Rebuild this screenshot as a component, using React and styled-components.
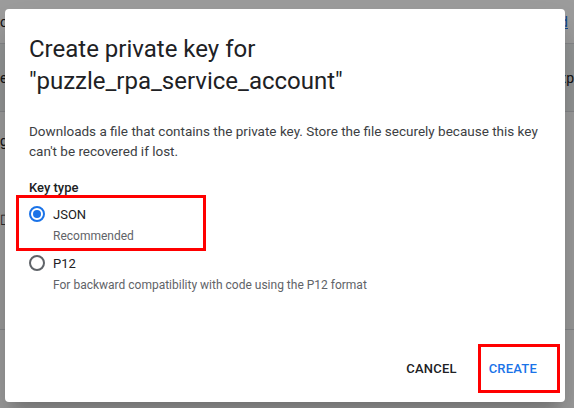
import React, { useState } from "react";
import styled, { createGlobalStyle } from "styled-components";

const GlobalStyle = createGlobalStyle`
  html, body {
    margin: 0;
    padding: 0;
    width: 574px;
    height: 408px;
    overflow: hidden;
    font-family: Roboto, "Liberation Sans", Arial, sans-serif;
  }
  * { box-sizing: border-box; }
`;

const Screen = styled.div`
  position: relative;
  width: 574px;
  height: 408px;
  overflow: hidden;
  background: #ffffff;
`;

const Page = styled.div`
  display: flex;
  flex-direction: column;
  height: 100%;
  font-size: 14px;
  color: #202124;
`;

const PageRow = styled.div`
  display: flex;
  justify-content: space-between;
  align-items: center;
  height: ${(p) => p.h}px;
  background: ${(p) => p.bg || "#ffffff"};
  border-bottom: ${(p) => (p.line ? "1px solid #dadce0" : "none")};
`;

const PageLink = styled.span`
  color: #1a73e8;
  text-decoration: underline;
  margin-right: 6px;
`;

const PageText = styled.span`
  margin-right: ${(p) => p.mr || 0}px;
`;

const Scrim = styled.div`
  position: absolute;
  inset: 0;
  background: rgba(0, 0, 0, 0.39);
  display: flex;
  align-items: flex-start;
  padding: 9px 0 0 5px;
`;

const Dialog = styled.div`
  width: 560px;
  height: 393px;
  background: #ffffff;
  border-radius: 4px;
  box-shadow: 0 11px 15px -7px rgba(0, 0, 0, 0.2), 0 24px 38px 3px rgba(0, 0, 0, 0.14);
  display: flex;
  flex-direction: column;
  padding: 24px 0 0 24px;
`;

const Title = styled.h2`
  margin: 0;
  font-size: 24px;
  font-weight: 400;
  line-height: 32px;
  color: #202124;
`;

const Body = styled.p`
  margin: 24px 0 0;
  font-size: 13.5px;
  line-height: 20px;
  color: #3c4043;
  padding-right: 8px;
`;

const Label = styled.div`
  margin-top: 17px;
  font-size: 13px;
  font-weight: 500;
  line-height: 20px;
  color: #202124;
`;

const Options = styled.div`
  display: flex;
  flex-direction: column;
  margin-left: -13px;
  width: 190px;
`;

const Option = styled.label`
  display: flex;
  flex-direction: column;
  padding: ${(p) => (p.highlight ? "4px 0 2px 10px" : "0 0 0 13px")};
  margin-top: ${(p) => (p.highlight ? "-3px" : "0")};
  border: ${(p) => (p.highlight ? "3px solid #ff0000" : "none")};
  white-space: nowrap;
  cursor: pointer;
`;

const OptionHead = styled.div`
  display: flex;
  align-items: center;
  gap: 8px;
  height: 24px;
  font-size: 13px;
  color: #202124;
`;

const Radio = styled.span`
  width: 16px;
  height: 16px;
  border-radius: 50%;
  border: 2px solid ${(p) => (p.checked ? "#1a73e8" : "#5f6368")};
  display: flex;
  align-items: center;
  justify-content: center;
  &::after {
    content: "";
    width: 8px;
    height: 8px;
    border-radius: 50%;
    background: ${(p) => (p.checked ? "#1a73e8" : "transparent")};
  }
`;

const Hint = styled.div`
  padding-left: 24px;
  font-size: 12px;
  line-height: 20px;
  color: #5f6368;
`;

const Actions = styled.div`
  margin-top: auto;
  display: flex;
  justify-content: flex-end;
  align-items: center;
  padding: 0 5px 9px 0;
`;

const Button = styled.button`
  border: 3px solid ${(p) => (p.highlight ? "#ff0000" : "transparent")};
  background: none;
  font-family: Roboto, "Liberation Sans", Arial, sans-serif;
  font-size: 13px;
  font-weight: 500;
  letter-spacing: 0.2px;
  text-transform: uppercase;
  color: ${(p) => (p.primary ? "#1a73e8" : "#202124")};
  height: 49px;
  padding: ${(p) => (p.primary ? "0 20px 0 8px" : "0 18px")};
  cursor: pointer;
`;

export default function App() {
  const [keyType, setKeyType] = useState("json");

  return (
    <Screen>
      <GlobalStyle />
      <Page>
        <PageRow h={44} line>
          <PageText>o</PageText>
          <PageLink>d</PageLink>
        </PageRow>
        <PageRow h={68} bg="#f1f3f4" line>
          <PageText>ec</PageText>
          <PageText>xp</PageText>
        </PageRow>
        <PageRow h={58}>
          <PageText>g</PageText>
        </PageRow>
        <PageRow h={100}>
          <PageText>☐</PageText>
        </PageRow>
        <PageRow h={60} bg="#fafafa" line />
        <PageRow h={78} />
      </Page>
      <Scrim>
        <Dialog role="dialog">
          <Title>
            Create private key for
            <br />
            "puzzle_rpa_service_account"
          </Title>
          <Body>
            Downloads a file that contains the private key. Store the file securely because this key
            can't be recovered if lost.
          </Body>
          <Label>Key type</Label>
          <Options>
            <Option highlight onClick={() => setKeyType("json")}>
              <OptionHead>
                <Radio checked={keyType === "json"} />
                JSON
              </OptionHead>
              <Hint>Recommended</Hint>
            </Option>
            <Option onClick={() => setKeyType("p12")}>
              <OptionHead>
                <Radio checked={keyType === "p12"} />
                P12
              </OptionHead>
              <Hint>For backward compatibility with code using the P12 format</Hint>
            </Option>
          </Options>
          <Actions>
            <Button>Cancel</Button>
            <Button primary highlight>Create</Button>
          </Actions>
        </Dialog>
      </Scrim>
    </Screen>
  );
}
